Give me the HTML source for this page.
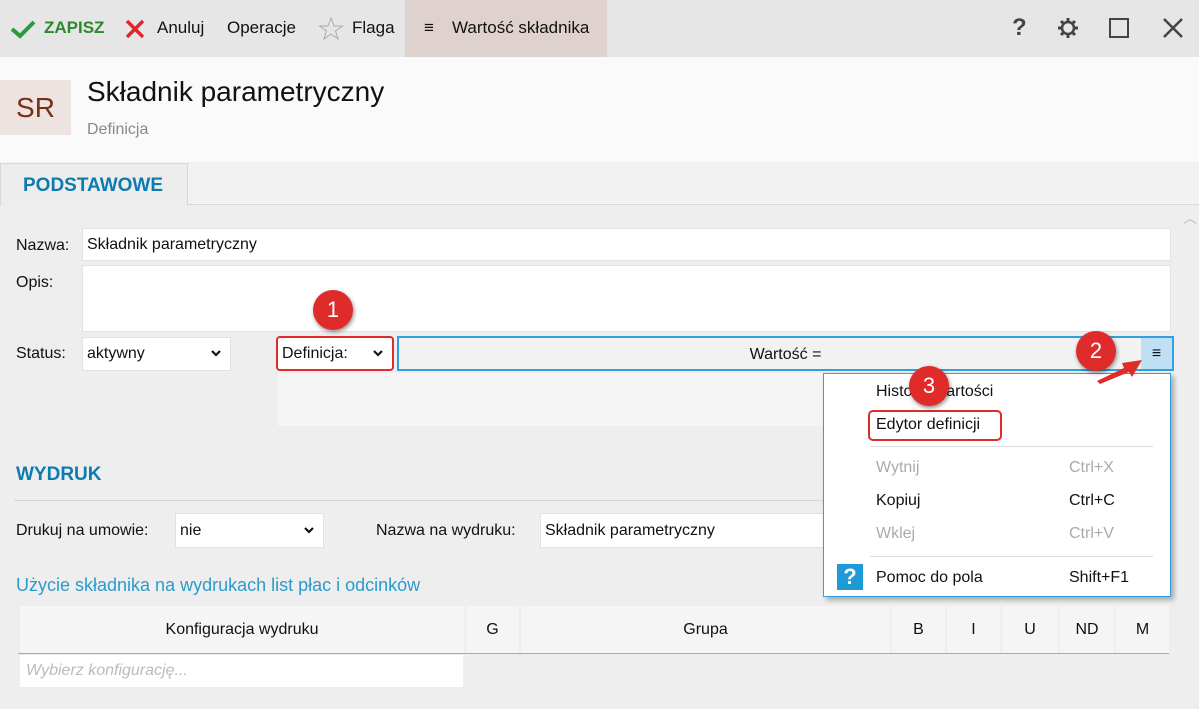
<!DOCTYPE html>
<html><head><meta charset="utf-8"><style>
*{box-sizing:border-box;margin:0;padding:0}
body{width:1199px;height:709px;overflow:hidden;background:#eeeeee;font-family:"Liberation Sans",sans-serif;font-size:16px;color:#111;position:relative}
.a{position:absolute}
.tb{left:0;top:0;width:1199px;height:57px;background:#e6e6e6}
.t{position:absolute;top:18px;font-size:17px}
.inp{position:absolute;background:#fff;border:1px solid #e2e2e2;padding-left:4px;display:flex;align-items:center}
.chev{position:absolute;right:8px;top:50%;margin-top:-6px;width:12px;height:10px}
.badge{position:absolute;width:40px;height:40px;border-radius:50%;background:#e02b2b;color:#fff;font-size:22px;text-align:center;line-height:40px;box-shadow:1px 2px 4px rgba(0,0,0,.45)}
.mi{position:absolute;left:876px;font-size:16px}
.sc{position:absolute;left:1069px;font-size:16px}
.th{position:absolute;top:606px;height:47px;background:#f5f5f5;text-align:center;line-height:47px}
</style></head><body>
<svg width="0" height="0" style="position:absolute"><defs><symbol id="cv" viewBox="0 0 12 10"><path d="M2 3 L6 7 L10 3" stroke="#111" stroke-width="2.2" fill="none"/></symbol></defs></svg>
<div class="a tb"></div>
<div class="a" style="left:405px;top:0;width:202px;height:57px;background:#dfd1cd"></div>
<svg class="a" style="left:10px;top:19px" width="26" height="20"><path d="M2 10 L10 17 L24 3" stroke="#2a9a3a" stroke-width="4" fill="none"/></svg>
<div class="t" style="left:44px;color:#2a8a2a;font-weight:bold">ZAPISZ</div>
<svg class="a" style="left:125px;top:19px" width="20" height="20"><path d="M2 2 L18 18 M18 2 L2 18" stroke="#e3262b" stroke-width="3.5"/></svg>
<div class="t" style="left:157px">Anuluj</div>
<div class="t" style="left:227px">Operacje</div>
<svg class="a" style="left:318px;top:16px" width="26" height="25"><path d="M13 2 L16 10 L24.5 10 L17.5 15 L20 23 L13 18 L6 23 L8.5 15 L1.5 10 L10 10 Z" fill="none" stroke="#aaa" stroke-width="1"/></svg>
<div class="t" style="left:352px">Flaga</div>
<div class="t" style="left:424px">≡</div>
<div class="t" style="left:452px">Wartość składnika</div>
<div class="t" style="left:1012px;font-size:24px;top:14px;color:#444;font-weight:bold">?</div>
<svg class="a" style="left:1057px;top:17px" width="22" height="22" viewBox="0 0 22 22"><circle cx="11" cy="11" r="6" fill="none" stroke="#444" stroke-width="2.5"/><g stroke="#444" stroke-width="3"><path d="M11 1v4M11 17v4M1 11h4M17 11h4M4 4l3 3M15 15l3 3M18 4l-3 3M4 18l3-3"/></g></svg>
<div class="a" style="left:1109px;top:18px;width:20px;height:20px;border:2.5px solid #444"></div>
<svg class="a" style="left:1163px;top:18px" width="20" height="20"><path d="M1 1L19 19M19 1L1 19" stroke="#444" stroke-width="2.5"/></svg>

<div class="a" style="left:0;top:57px;width:1199px;height:105px;background:#fafafa"></div>
<div class="a" style="left:0;top:80px;width:71px;height:55px;background:#ede3e1;color:#7a2e12;font-size:28px;text-align:center;line-height:55px">SR</div>
<div class="a" style="left:87px;top:76px;font-size:28px">Składnik parametryczny</div>
<div class="a" style="left:87px;top:121px;font-size:16px;color:#888">Definicja</div>

<div class="a" style="left:0;top:162px;width:1199px;height:43px;background:#f2f2f2;border-bottom:1px solid #d8d8d8"></div>
<div class="a" style="left:0;top:163px;width:188px;height:43px;background:#ededed;border:1px solid #d8d8d8;border-bottom:none;color:#0d7bb0;font-weight:bold;font-size:19px;line-height:44px;padding-left:22px">PODSTAWOWE</div>
<div class="a" style="left:1183px;top:208px;color:#bbb;font-size:14px">︿</div>

<div class="a" style="left:16px;top:237px">Nazwa:</div>
<div class="inp" style="left:82px;top:228px;width:1089px;height:33px">Składnik parametryczny</div>
<div class="a" style="left:16px;top:274px">Opis:</div>
<div class="inp" style="left:82px;top:265px;width:1089px;height:67px"></div>
<div class="a" style="left:16px;top:345px">Status:</div>
<div class="inp" style="left:82px;top:337px;width:149px;height:34px">aktywny<svg class="chev"><use href="#cv"/></svg></div>
<div class="inp" style="left:276px;top:336px;width:118px;height:35px;border:2px solid #e02b2b;border-radius:4px">Definicja:<svg class="chev"><use href="#cv"/></svg></div>
<div class="a" style="left:397px;top:336px;width:777px;height:35px;background:#f2f2f2;border:2px solid #30a0e0;text-align:center;line-height:33px">Wartość =</div>
<div class="a" style="left:1141px;top:338px;width:31px;height:31px;background:#bfe0f4;text-align:center;line-height:31px">≡</div>
<div class="a" style="left:278px;top:373px;width:550px;height:53px;background:#f5f5f5"></div>

<div class="a" style="left:16px;top:464px;color:#0d7bb0;font-weight:bold;font-size:19px">WYDRUK</div>
<div class="a" style="left:14px;top:500px;width:810px;height:1px;background:#d5d5d5"></div>
<div class="a" style="left:16px;top:522px">Drukuj na umowie:</div>
<div class="inp" style="left:175px;top:513px;width:149px;height:35px">nie<svg class="chev"><use href="#cv"/></svg></div>
<div class="a" style="left:376px;top:522px">Nazwa na wydruku:</div>
<div class="inp" style="left:540px;top:513px;width:290px;height:35px">Składnik parametryczny</div>
<div class="a" style="left:16px;top:575px;color:#2a9ccc;font-size:18px">Użycie składnika na wydrukach list płac i odcinków</div>

<div class="th" style="left:20px;width:444px">Konfiguracja wydruku</div>
<div class="th" style="left:466px;width:53px">G</div>
<div class="th" style="left:521px;width:369px">Grupa</div>
<div class="th" style="left:892px;width:53px">B</div>
<div class="th" style="left:947px;width:53px">I</div>
<div class="th" style="left:1002px;width:56px">U</div>
<div class="th" style="left:1060px;width:54px">ND</div>
<div class="th" style="left:1116px;width:53px">M</div>
<div class="a" style="left:18px;top:653px;width:1151px;height:1px;background:#aaa"></div>
<div class="a" style="left:20px;top:655px;width:443px;height:32px;background:#fff;color:#bbb;font-style:italic;line-height:32px;padding-left:6px">Wybierz konfigurację...</div>

<div class="a" style="left:823px;top:373px;width:348px;height:224px;background:#fff;border:1px solid #30a0e0;box-shadow:3px 3px 5px rgba(0,0,0,.3)"></div>
<div class="mi" style="top:383px">Historia wartości</div>
<div class="a" style="left:868px;top:410px;width:134px;height:31px;border:2px solid #e02b2b;border-radius:5px"></div>
<div class="mi" style="top:416px">Edytor definicji</div>
<div class="a" style="left:870px;top:446px;width:283px;height:1px;background:#ddd"></div>
<div class="mi" style="top:459px;color:#aaa">Wytnij</div><div class="sc" style="top:459px;color:#aaa">Ctrl+X</div>
<div class="mi" style="top:492px">Kopiuj</div><div class="sc" style="top:492px">Ctrl+C</div>
<div class="mi" style="top:525px;color:#aaa">Wklej</div><div class="sc" style="top:525px;color:#aaa">Ctrl+V</div>
<div class="a" style="left:870px;top:556px;width:283px;height:1px;background:#ddd"></div>
<div class="a" style="left:837px;top:564px;width:26px;height:26px;background:#1e9ad6;color:#fff;font-weight:bold;font-size:22px;text-align:center;line-height:26px">?</div>
<div class="mi" style="top:569px">Pomoc do pola</div><div class="sc" style="top:569px">Shift+F1</div>

<div class="badge" style="left:313px;top:290px">1</div>
<div class="badge" style="left:1076px;top:331px">2</div>
<svg class="a" style="left:1094px;top:355px" width="52" height="30"><path d="M3 26 L30 13 L28 8 L48 5 L38 22 L35 17 L6 29 Z" fill="#e02b2b"/></svg>
<div class="badge" style="left:909px;top:366px">3</div>
</body></html>
